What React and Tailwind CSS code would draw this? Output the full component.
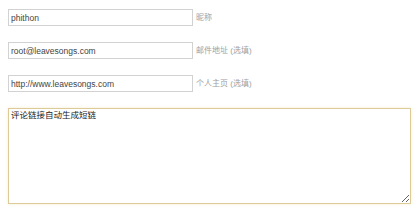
export default function App() {
  const rows = [
    { value: "phithon", label: "昵称" },
    { value: "root@leavesongs.com", label: "邮件地址 (选填)" },
    { value: "http://www.leavesongs.com", label: "个人主页 (选填)" },
  ];
  return (
    <div className="w-[420px] h-[211px] bg-white pl-[8px] pt-[9px] flex flex-col gap-[16px] font-['Liberation_Sans',Arial,'Noto_Sans_CJK_SC',sans-serif]">
      {rows.map((r) => (
        <div key={r.value} className="flex items-center h-[17px]">
          <input
            readOnly
            value={r.value}
            className="w-[185px] h-[17px] border border-[#d2d2d2] bg-white px-[2px] text-[8.5px] text-[#444] outline-none font-['Liberation_Sans',Arial,'Noto_Sans_CJK_SC',sans-serif]"
          />
          <span className="ml-[3px] text-[8px] text-[#a0a0a0]">{r.label}</span>
        </div>
      ))}
      <textarea
        readOnly
        value="评论链接自动生成短链"
        className="w-[403px] h-[96px] border border-[#dcca98] shadow-[0_0_3px_#f5edd0] bg-white px-[2px] py-[1px] text-[8.5px] leading-[11px] text-[#222] outline-none font-['Liberation_Sans',Arial,'Noto_Sans_CJK_SC',sans-serif]"
      />
    </div>
  );
}
